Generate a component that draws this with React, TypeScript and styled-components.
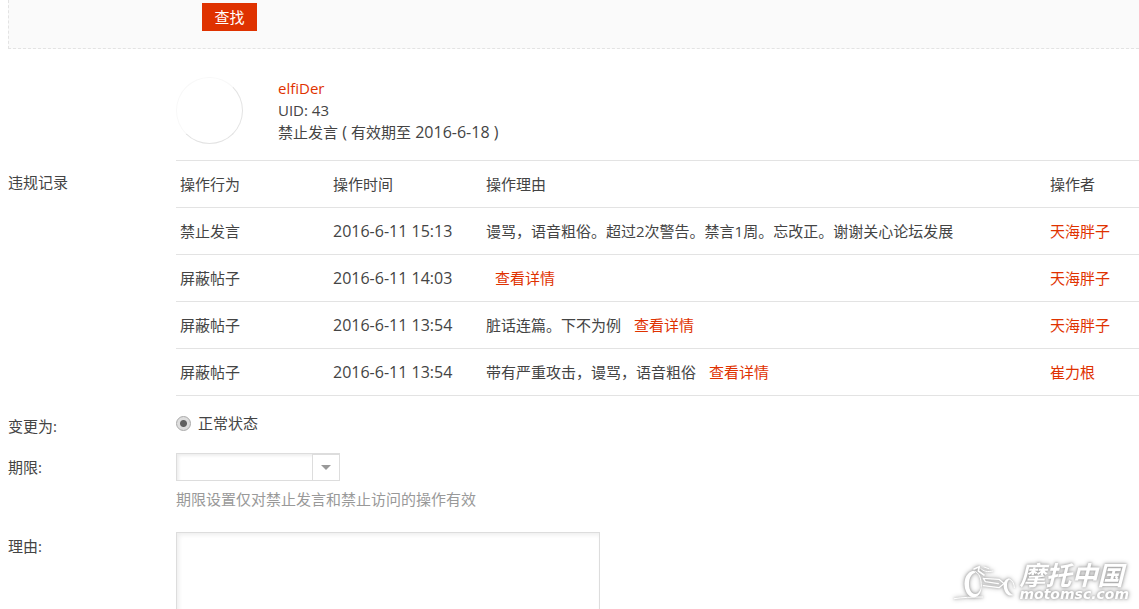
import React from 'react';
import styled, { createGlobalStyle } from 'styled-components';

const RED = '#df3200';
const LINE = '#e3e3e3';
const FONT = '"Open Sans", "Noto Sans CJK SC", sans-serif';

const GlobalStyle = createGlobalStyle`
  *, *::before, *::after { box-sizing: border-box; }
  body {
    margin: 0;
    background: #fff;
    color: #444;
    font-family: ${FONT};
    font-size: 15px;
    line-height: 22px;
  }
`;

const Page = styled.div`
  position: relative;
  height: 100vh;
  overflow: hidden;
  padding-left: 8px;
`;

const SearchPanel = styled.div`
  padding: 3px 0 17px 193px;
  background: #fafafa;
  border: 1px dashed ${LINE};
  border-width: 0 0 1px 1px;
`;

const SearchButton = styled.button`
  display: block;
  height: 28px;
  padding: 0 12px;
  border: 0;
  background: ${RED};
  color: #fff;
  font: inherit;
  line-height: 28px;
  width: 55px;
  white-space: nowrap;
`;

const Member = styled.section`
  display: flex;
  gap: 35px;
  padding: 28px 0 16px 168px;
`;

const Avatar = styled.div`
  width: 67px;
  height: 67px;
  border: 1px solid;
  border-color: #f8f8f8 #e3e3e3 #e3e3e3 #f8f8f8;
  border-radius: 50%;
`;

const MemberInfo = styled.div`
  display: flex;
  flex-direction: column;
  align-items: flex-start;
`;

const Link = styled.a`
  color: ${RED};
  text-decoration: none;
`;

const DetailLink = styled(Link)<{ $gap?: number }>`
  margin-left: ${(p) => p.$gap ?? 13}px;
`;

const Numeric = styled.span`
  font-size: 16px;
`;

const FormRow = styled.div<{ $top?: number }>`
  display: grid;
  grid-template-columns: 168px minmax(0, 1fr);
  align-items: start;
  margin-top: ${(p) => p.$top ?? 0}px;
`;

const Label = styled.label<{ $inset?: number }>`
  padding-top: ${(p) => p.$inset ?? 3}px;
`;

const Table = styled.table`
  width: 100%;
  table-layout: fixed;
  border-collapse: separate;
  border-spacing: 0;
  border-top: 1px solid ${LINE};
`;

const Cell = styled.td`
  height: 47px;
  padding: 0 4px;
  border-bottom: 1px solid ${LINE};
  font-weight: 400;
  text-align: left;
  white-space: nowrap;
`;

const Col = styled.col<{ $w?: number }>`
  width: ${(p) => (p.$w ? `${p.$w}px` : 'auto')};
`;

const Choice = styled.label`
  display: flex;
  align-items: center;
  gap: 7px;
`;

const Radio = styled.input`
  appearance: none;
  width: 15px;
  height: 15px;
  margin: 0;
  border: 1px solid #a9a9a9;
  border-radius: 50%;
  background: radial-gradient(circle, #616161 0 3px, #dedede 4px);
`;

const SelectBox = styled.div`
  position: relative;
  width: 164px;
  height: 28px;
`;

const Select = styled.select`
  appearance: none;
  display: block;
  width: 100%;
  height: 100%;
  padding: 0 32px 0 6px;
  border: 1px solid #ddd;
  border-radius: 0;
  background: #fff;
  box-shadow: inset 2px 2px 3px #eee;
  font: inherit;
`;

const Arrow = styled.span`
  position: absolute;
  top: 1px;
  right: 0;
  bottom: 0;
  width: 28px;
  display: grid;
  place-items: center;
  border: 1px solid #ddd;
  background: #fff;
  pointer-events: none;

  &::before {
    content: '';
    border: 5px solid transparent;
    border-top-color: #999;
    border-bottom-width: 0;
  }
`;

const Hint = styled.div`
  margin-top: 7px;
  color: #999;
`;

const TextArea = styled.textarea`
  display: block;
  width: 424px;
  max-width: 100%;
  height: 120px;
  padding: 6px;
  border: 1px solid #ddd;
  box-shadow: inset 2px 2px 4px #eee;
  font: inherit;
  resize: none;
`;

const Brand = styled.div`
  position: absolute;
  right: 10px;
  bottom: 8px;
  display: flex;
  align-items: flex-end;
  color: #fff;
  filter: drop-shadow(0 0 1px #aaa) drop-shadow(0 0 2px #aaa);
`;

const BrandText = styled.div`
  display: flex;
  flex-direction: column;
  font-style: italic;
  font-weight: 700;
`;

const BrandName = styled.span`
  font-family: "Noto Sans CJK SC", sans-serif;
  font-size: 26px;
  line-height: 26px;
`;

const BrandDomain = styled.span`
  font-family: "DejaVu Sans", sans-serif;
  font-size: 14px;
  line-height: 14px;
`;

const records = [
  { action: '禁止发言', time: '2016-6-11 15:13', reason: '谩骂，语音粗俗。超过2次警告。禁言1周。忘改正。谢谢关心论坛发展', detail: false, operator: '天海胖子' },
  { action: '屏蔽帖子', time: '2016-6-11 14:03', reason: '', detail: true, operator: '天海胖子' },
  { action: '屏蔽帖子', time: '2016-6-11 13:54', reason: '脏话连篇。下不为例', detail: true, operator: '天海胖子' },
  { action: '屏蔽帖子', time: '2016-6-11 13:54', reason: '带有严重攻击，谩骂，语音粗俗', detail: true, operator: '崔力根' },
];

const headings = ['操作行为', '操作时间', '操作理由', '操作者'];

function Motorcycle() {
  return (
    <svg width="66" height="38" viewBox="13 22 198 114" fill="none" stroke="currentColor" strokeLinecap="round" strokeLinejoin="round" aria-hidden="true">
      <path d="M76 45C56 47 45 68 48 92C51 116 66 129 81 124C93 120 99 107 98 92C95 106 89 115 80 115C67 115 60 99 61 82C62 65 69 54 80 51Z" fill="currentColor" stroke="none" />
      <path d="M78 47C91 51 98 66 98 92" strokeWidth="3" />
      <path d="M76 40L92 33L89 46L106 58" strokeWidth="5" />
      <path d="M96 38C104 47 116 50 133 46M106 34L120 39" strokeWidth="3" />
      <path d="M104 68L151 71L164 82M104 68L110 78L149 84M104 90L151 96L168 82" strokeWidth="4" />
      <path d="M181 68C168 70 162 83 166 99C170 115 182 124 194 118C184 115 176 104 175 91C174 80 178 73 185 71Z" fill="currentColor" stroke="none" />
      <path d="M184 71C192 75 197 85 197 96" strokeWidth="3" />
      <path d="M17 129C42 125 70 124 102 124" strokeWidth="3" />
    </svg>
  );
}

export default function App() {
  return (
    <>
      <GlobalStyle />
      <Page>
        <SearchPanel>
          <SearchButton type="button">查找</SearchButton>
        </SearchPanel>

        <Member>
          <Avatar />
          <MemberInfo>
            <Link href="#member">elfiDer</Link>
            <span>UID: 43</span>
            <span>禁止发言<Numeric> ( </Numeric>有效期至<Numeric> 2016-6-18 )</Numeric></span>
          </MemberInfo>
        </Member>

        <FormRow>
          <Label as="div" $inset={11} id="records">违规记录</Label>
          <Table aria-labelledby="records">
            <colgroup>
              <Col $w={153} />
              <Col $w={153} />
              <Col />
              <Col $w={93} />
            </colgroup>
            <thead>
              <tr>
                {headings.map((h) => (
                  <Cell as="th" scope="col" key={h}>{h}</Cell>
                ))}
              </tr>
            </thead>
            <tbody>
              {records.map((r, i) => (
                <tr key={i}>
                  <Cell>{r.action}</Cell>
                  <Cell><Numeric>{r.time}</Numeric></Cell>
                  <Cell>
                    {r.reason}
                    {r.detail && <DetailLink href="#detail" $gap={r.reason ? 13 : 9}>查看详情</DetailLink>}
                  </Cell>
                  <Cell><Link href="#operator">{r.operator}</Link></Cell>
                </tr>
              ))}
            </tbody>
          </Table>
        </FormRow>

        <FormRow $top={16}>
          <Label as="div">变更为:</Label>
          <Choice>
            <Radio type="radio" name="status" defaultChecked />
            正常状态
          </Choice>
        </FormRow>

        <FormRow $top={16}>
          <Label htmlFor="term">期限:</Label>
          <div>
            <SelectBox>
              <Select id="term" defaultValue="">
                <option value="" />
              </Select>
              <Arrow />
            </SelectBox>
            <Hint>期限设置仅对禁止发言和禁止访问的操作有效</Hint>
          </div>
        </FormRow>

        <FormRow $top={22}>
          <Label htmlFor="reason">理由:</Label>
          <TextArea id="reason" />
        </FormRow>

        <Brand>
          <Motorcycle />
          <BrandText>
            <BrandName>摩托中国</BrandName>
            <BrandDomain>motomsc.com</BrandDomain>
          </BrandText>
        </Brand>
      </Page>
    </>
  );
}
